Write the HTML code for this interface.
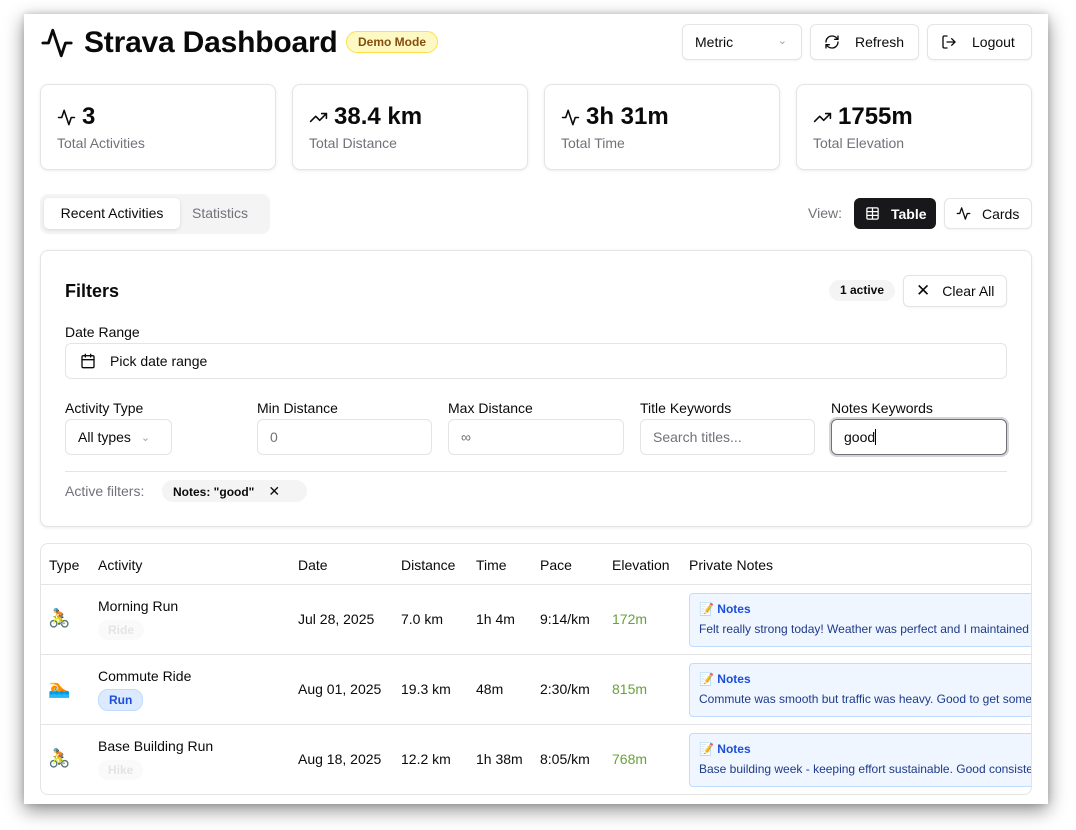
<!DOCTYPE html>
<html><head><meta charset="utf-8"><style>
*{box-sizing:border-box;margin:0;padding:0}
body{width:1076px;height:830px;background:#fff;font-family:"Liberation Sans",Arial,sans-serif;color:#0a0a0a;position:relative;overflow:hidden}
.frame{position:absolute;left:24px;top:14px;width:1024px;height:790px;background:#fff;box-shadow:0 6px 18px rgba(0,0,0,.45),0 0 6px rgba(0,0,0,.15);overflow:hidden}
.a{position:absolute}
.card{position:absolute;border:1px solid #e4e4e7;border-radius:8px;background:#fff;box-shadow:0 1px 3px rgba(0,0,0,.08)}
.btn{position:absolute;border:1px solid #e4e4e7;border-radius:6px;background:#fff;font-size:14px;display:flex;align-items:center;box-shadow:0 1px 2px rgba(0,0,0,.05)}
.lbl{position:absolute;font-size:14px;font-weight:500;color:#0a0a0a}
.inp{position:absolute;border:1px solid #e4e4e7;border-radius:6px;font-size:14px;display:flex;align-items:center;padding-left:12px;height:36px;top:405px}
.sv{position:absolute;font-size:24px;font-weight:700;top:89px;display:flex;align-items:center;gap:6px}
.sl{position:absolute;font-size:14px;color:#71717a;top:121px}
.th{position:absolute;top:13px;font-size:14px;font-weight:500}
.td{position:absolute;font-size:14px}
.note{position:absolute;left:648px;width:360px;height:54px;background:#eff6ff;border:1px solid #bfdbfe;border-radius:4px;font-size:12px;color:#1e3a8a;padding:8px 9px;white-space:nowrap;overflow:hidden}
.note b{color:#1d4ed8;font-weight:700;display:block;margin-bottom:6px;font-size:12px}
.rl{position:absolute;left:0;width:992px;height:1px;background:#e4e4e7}
.pill{position:absolute;font-size:12px;font-weight:700;border-radius:10px;padding:3px 10px}
</style></head><body>
<div class="frame">
<svg class="a" style="left:16px;top:12px" width="34" height="34" viewBox="0 0 24 24" fill="none" stroke="#0a0a0a" stroke-width="2" stroke-linecap="round" stroke-linejoin="round"><path d="M22 12h-4l-3 9L9 3l-3 9H2"/></svg>
<div class="a" style="left:60px;top:12px;font-size:30px;font-weight:700;letter-spacing:-0.2px">Strava Dashboard</div>
<div class="a" style="left:322px;top:17px;width:92px;height:22px;background:#fef9c3;border:1px solid #fde047;border-radius:11px;font-size:12px;font-weight:700;color:#854d0e;text-align:center;line-height:20px">Demo Mode</div>
<div class="btn" style="left:658px;top:10px;width:120px;height:36px;padding-left:12px">Metric<span style="position:absolute;right:14px;top:9px;color:#a1a1aa;font-size:11px">&#8964;</span></div>
<div class="btn" style="left:786px;top:10px;width:109px;height:36px;padding-left:13px;font-weight:500"><svg width="16" height="16" viewBox="0 0 24 24" fill="none" stroke="#0a0a0a" stroke-width="2" stroke-linecap="round" stroke-linejoin="round"><path d="M3 12a9 9 0 0 1 9-9 9.75 9.75 0 0 1 6.74 2.74L21 8"/><path d="M21 3v5h-5"/><path d="M21 12a9 9 0 0 1-9 9 9.75 9.75 0 0 1-6.74-2.74L3 16"/><path d="M8 16H3v5"/></svg><span style="margin-left:15px">Refresh</span></div>
<div class="btn" style="left:903px;top:10px;width:105px;height:36px;padding-left:13px;font-weight:500"><svg width="16" height="16" viewBox="0 0 24 24" fill="none" stroke="#0a0a0a" stroke-width="2" stroke-linecap="round" stroke-linejoin="round"><path d="M9 21H5a2 2 0 0 1-2-2V5a2 2 0 0 1 2-2h4"/><path d="M16 17l5-5-5-5"/><path d="M21 12H9"/></svg><span style="margin-left:15px">Logout</span></div>
<div class="card" style="left:16px;top:70px;width:236px;height:86px"></div>
<div class="card" style="left:268px;top:70px;width:236px;height:86px"></div>
<div class="card" style="left:520px;top:70px;width:236px;height:86px"></div>
<div class="card" style="left:772px;top:70px;width:236px;height:86px"></div>
<div class="sv" style="left:33px"><svg width="19" height="19" viewBox="0 0 24 24" fill="none" stroke="#0a0a0a" stroke-width="2" stroke-linecap="round" stroke-linejoin="round"><path d="M22 12h-4l-3 9L9 3l-3 9H2"/></svg>3</div>
<div class="sv" style="left:285px"><svg width="19" height="19" viewBox="0 0 24 24" fill="none" stroke="#0a0a0a" stroke-width="2" stroke-linecap="round" stroke-linejoin="round"><path d="M22 7l-8.5 8.5-5-5L2 17"/><path d="M16 7h6v6"/></svg>38.4 km</div>
<div class="sv" style="left:537px"><svg width="19" height="19" viewBox="0 0 24 24" fill="none" stroke="#0a0a0a" stroke-width="2" stroke-linecap="round" stroke-linejoin="round"><path d="M22 12h-4l-3 9L9 3l-3 9H2"/></svg>3h 31m</div>
<div class="sv" style="left:789px"><svg width="19" height="19" viewBox="0 0 24 24" fill="none" stroke="#0a0a0a" stroke-width="2" stroke-linecap="round" stroke-linejoin="round"><path d="M22 7l-8.5 8.5-5-5L2 17"/><path d="M16 7h6v6"/></svg>1755m</div>
<div class="sl" style="left:33px">Total Activities</div>
<div class="sl" style="left:285px">Total Distance</div>
<div class="sl" style="left:537px">Total Time</div>
<div class="sl" style="left:789px">Total Elevation</div>
<div class="a" style="left:16px;top:180px;width:230px;height:40px;background:#f4f4f5;border-radius:8px"></div>
<div class="a" style="left:20px;top:184px;width:136px;height:31px;background:#fff;border-radius:5px;box-shadow:0 1px 3px rgba(0,0,0,.12);font-size:14px;font-weight:500;text-align:center;line-height:31px">Recent Activities</div>
<div class="a" style="left:168px;top:184px;font-size:14px;font-weight:500;color:#71717a;line-height:31px">Statistics</div>
<div class="a" style="left:784px;top:184px;font-size:14px;color:#71717a;line-height:31px">View:</div>
<div class="a" style="left:830px;top:184px;width:82px;height:31px;background:#18181b;border-radius:6px;color:#fff;font-size:14px;font-weight:700;display:flex;align-items:center;padding-left:11px"><svg width="15" height="15" viewBox="0 0 24 24" fill="none" stroke="#fff" stroke-width="2"><rect x="3" y="3" width="18" height="18" rx="2"/><path d="M3 9h18M3 15h18M12 3v18"/></svg><span style="margin-left:11px">Table</span></div>
<div class="btn" style="left:920px;top:184px;width:88px;height:31px;padding-left:11px;font-weight:500"><svg width="15" height="15" viewBox="0 0 24 24" fill="none" stroke="#0a0a0a" stroke-width="2" stroke-linecap="round" stroke-linejoin="round"><path d="M22 12h-4l-3 9L9 3l-3 9H2"/></svg><span style="margin-left:11px">Cards</span></div>
<div class="card" style="left:16px;top:236px;width:992px;height:277px"></div>
<div class="a" style="left:41px;top:267px;font-size:18px;font-weight:700">Filters</div>
<div class="a" style="left:805px;top:266px;width:66px;height:21px;background:#f4f4f5;border-radius:11px;font-size:12px;font-weight:700;text-align:center;line-height:21px">1 active</div>
<div class="btn" style="left:879px;top:261px;width:104px;height:32px;padding-left:12px;font-weight:500"><span style="font-size:17px;font-weight:400">&#10005;</span><span style="margin-left:12px">Clear All</span></div>
<div class="lbl" style="left:41px;top:310px">Date Range</div>
<div class="inp" style="left:41px;top:329px;width:942px;padding-left:14px"><svg width="16" height="16" viewBox="0 0 24 24" fill="none" stroke="#0a0a0a" stroke-width="2" stroke-linecap="round"><rect x="3" y="4" width="18" height="18" rx="2"/><path d="M16 2v4M8 2v4M3 10h18"/></svg><span style="margin-left:14px">Pick date range</span></div>
<div class="lbl" style="left:41px;top:386px">Activity Type</div>
<div class="lbl" style="left:233px;top:386px">Min Distance</div>
<div class="lbl" style="left:424px;top:386px">Max Distance</div>
<div class="lbl" style="left:616px;top:386px">Title Keywords</div>
<div class="lbl" style="left:807px;top:386px">Notes Keywords</div>
<div class="inp" style="left:41px;width:107px">All types<span style="margin-left:10px;color:#a1a1aa;font-size:11px">&#8964;</span></div>
<div class="inp" style="left:233px;width:175px;color:#71717a">0</div>
<div class="inp" style="left:424px;width:176px;color:#71717a">&#8734;</div>
<div class="inp" style="left:616px;width:175px;color:#71717a">Search titles...</div>
<div class="inp" style="left:807px;width:176px;border:1px solid #71717a;box-shadow:0 0 0 2px #d4d4d8">good<span style="display:inline-block;width:1px;height:16px;background:#000"></span></div>
<div class="a" style="left:41px;top:457px;width:942px;height:1px;background:#e4e4e7"></div>
<div class="a" style="left:41px;top:469px;font-size:14px;font-weight:500;color:#71717a">Active filters:</div>
<div class="a" style="left:138px;top:466px;width:145px;height:22px;background:#f4f4f5;border-radius:11px;font-size:12px;font-weight:700;line-height:22px;padding-left:11px">Notes: "good"<span style="margin-left:14px;font-size:14px;font-weight:400">&#10005;</span></div>
<div class="a" style="left:16px;top:529px;width:992px;height:252px;border:1px solid #e4e4e7;border-radius:8px;overflow:hidden">
<div class="th" style="left:8px">Type</div>
<div class="th" style="left:57px">Activity</div>
<div class="th" style="left:257px">Date</div>
<div class="th" style="left:360px">Distance</div>
<div class="th" style="left:435px">Time</div>
<div class="th" style="left:499px">Pace</div>
<div class="th" style="left:571px">Elevation</div>
<div class="th" style="left:648px">Private Notes</div>
<div class="rl" style="top:40px"></div>
<div class="rl" style="top:110px"></div>
<div class="rl" style="top:180px"></div>
<div class="td" style="left:7px;top:64px;font-size:18px">🚴</div>
<div class="td" style="left:57px;top:54px;font-weight:500">Morning Run</div>
<div class="pill" style="left:57px;top:76px;color:#e4e4e7;background:#fafafa">Ride</div>
<div class="td" style="left:257px;top:67px">Jul 28, 2025</div>
<div class="td" style="left:360px;top:67px;font-weight:500">7.0 km</div>
<div class="td" style="left:435px;top:67px;font-weight:500">1h 4m</div>
<div class="td" style="left:499px;top:67px;font-weight:500">9:14/km</div>
<div class="td" style="left:571px;top:67px;color:#65a33a;font-weight:500">172m</div>
<div class="note" style="top:49px"><b>📝 Notes</b>Felt really strong today! Weather was perfect and I maintained a good pace</div>
<div class="td" style="left:7px;top:134px;font-size:18px">🏊</div>
<div class="td" style="left:57px;top:124px;font-weight:500">Commute Ride</div>
<div class="pill" style="left:57px;top:145px;color:#1d4ed8;background:#dbeafe;border:1px solid #bfdbfe">Run</div>
<div class="td" style="left:257px;top:137px">Aug 01, 2025</div>
<div class="td" style="left:360px;top:137px;font-weight:500">19.3 km</div>
<div class="td" style="left:435px;top:137px;font-weight:500">48m</div>
<div class="td" style="left:499px;top:137px;font-weight:500">2:30/km</div>
<div class="td" style="left:571px;top:137px;color:#65a33a;font-weight:500">815m</div>
<div class="note" style="top:119px"><b>📝 Notes</b>Commute was smooth but traffic was heavy. Good to get some miles in</div>
<div class="td" style="left:7px;top:204px;font-size:18px">🚴</div>
<div class="td" style="left:57px;top:194px;font-weight:500">Base Building Run</div>
<div class="pill" style="left:57px;top:216px;color:#e4e4e7;background:#fafafa">Hike</div>
<div class="td" style="left:257px;top:207px">Aug 18, 2025</div>
<div class="td" style="left:360px;top:207px;font-weight:500">12.2 km</div>
<div class="td" style="left:435px;top:207px;font-weight:500">1h 38m</div>
<div class="td" style="left:499px;top:207px;font-weight:500">8:05/km</div>
<div class="td" style="left:571px;top:207px;color:#65a33a;font-weight:500">768m</div>
<div class="note" style="top:189px"><b>📝 Notes</b>Base building week - keeping effort sustainable. Good consistency</div>
</div>
</div>
</body></html>
